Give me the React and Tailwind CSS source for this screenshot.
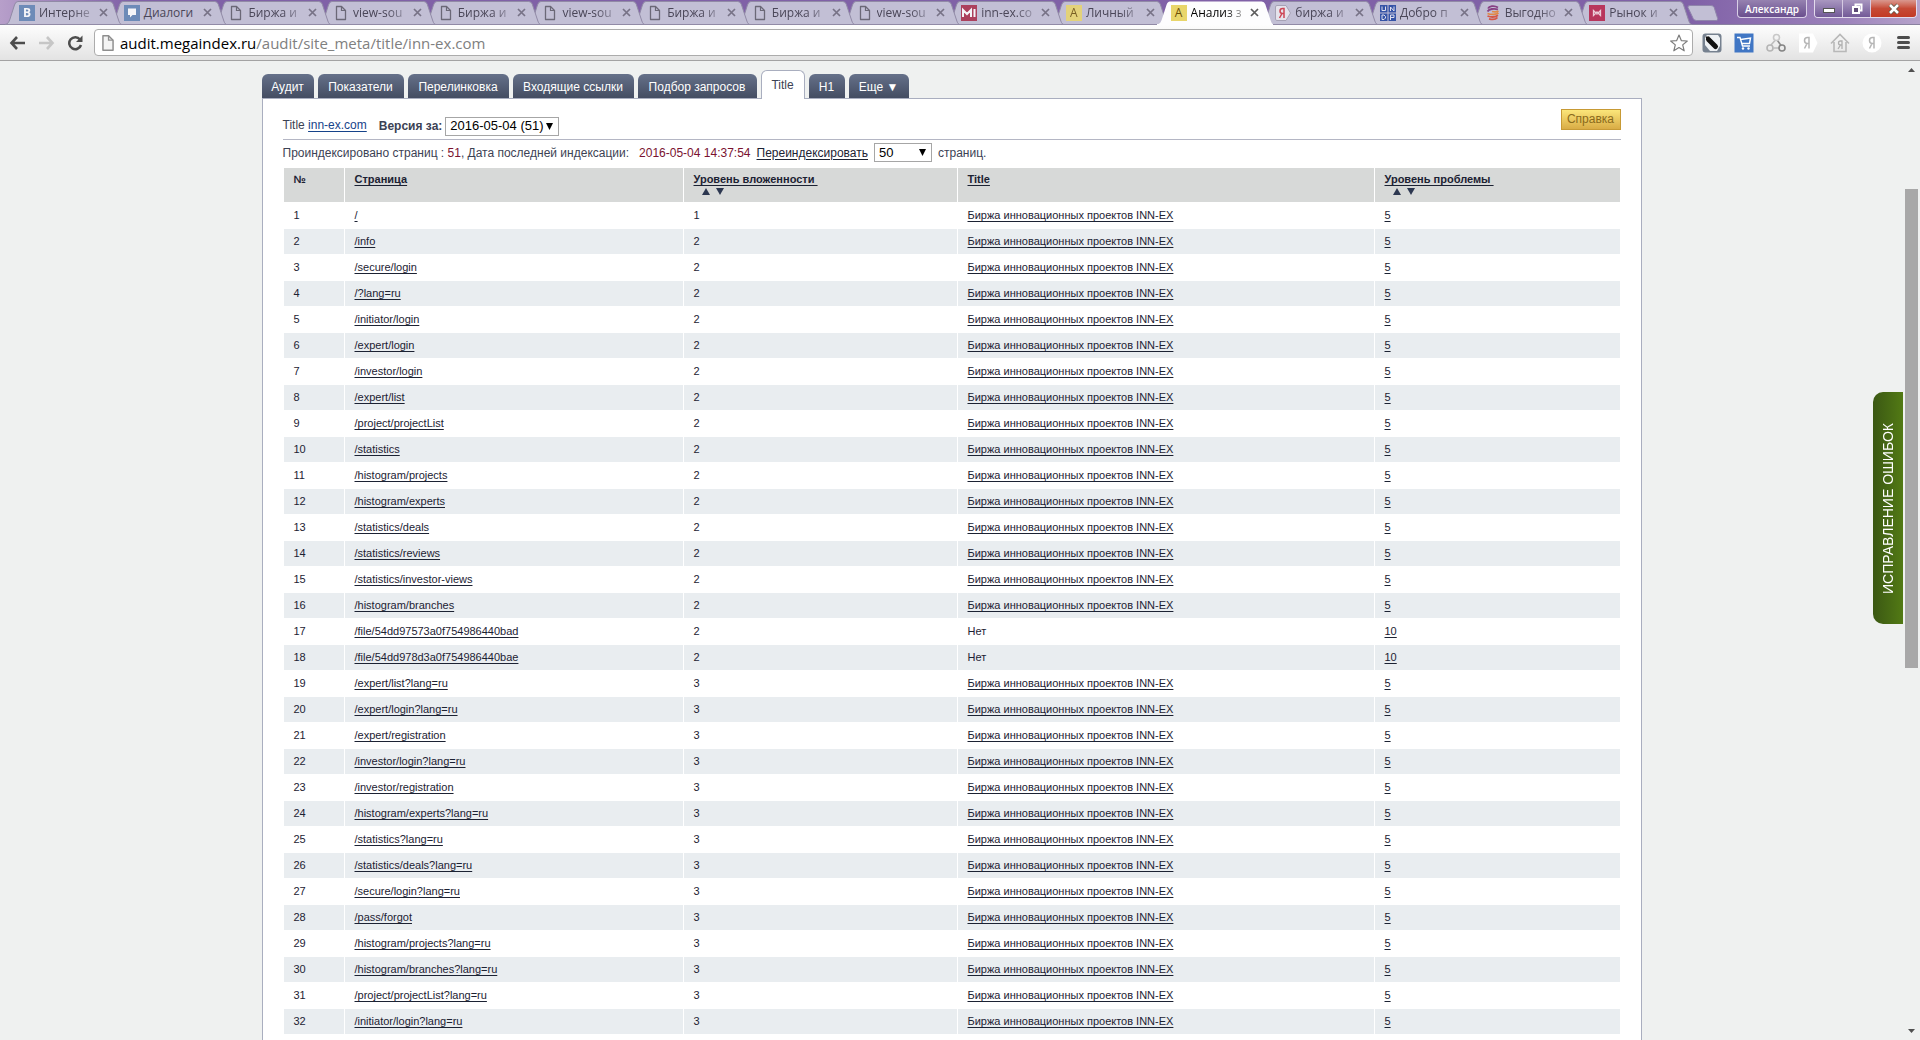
import { useState } from "react";
import clsx from "clsx";

const browserTabs = [
  { icon: "vk", title: "Интерне" },
  { icon: "dialog", title: "Диалоги" },
  { icon: "file", title: "Биржа и" },
  { icon: "file", title: "view-sou" },
  { icon: "file", title: "Биржа и" },
  { icon: "file", title: "view-sou" },
  { icon: "file", title: "Биржа и" },
  { icon: "file", title: "Биржа и" },
  { icon: "file", title: "view-sou" },
  { icon: "mi", title: "inn-ex.co" },
  { icon: "audit", title: "Личный" },
  { icon: "audit", title: "Анализ з", active: true },
  { icon: "yandex", title: "биржа и" },
  { icon: "undp", title: "Добро п" },
  { icon: "globe", title: "Выгодно" },
  { icon: "market", title: "Рынок и" },
];

const siteTabs = [
  { name: "Аудит", width: "w-[52px]" },
  { name: "Показатели", width: "w-[86px]" },
  { name: "Перелинковка", width: "w-[101px]" },
  { name: "Входящие ссылки", width: "w-[121px]" },
  { name: "Подбор запросов", width: "w-[119px]" },
  { name: "Title", width: "w-[44px]" },
  { name: "H1", width: "w-[36px]" },
  { name: "Еще ▼", width: "w-[60px]" },
];

const defaultTitle = "Биржа инновационных проектов INN-EX";

const pages = [
  { path: "/", level: 1 },
  { path: "/info", level: 2 },
  { path: "/secure/login", level: 2 },
  { path: "/?lang=ru", level: 2 },
  { path: "/initiator/login", level: 2 },
  { path: "/expert/login", level: 2 },
  { path: "/investor/login", level: 2 },
  { path: "/expert/list", level: 2 },
  { path: "/project/projectList", level: 2 },
  { path: "/statistics", level: 2 },
  { path: "/histogram/projects", level: 2 },
  { path: "/histogram/experts", level: 2 },
  { path: "/statistics/deals", level: 2 },
  { path: "/statistics/reviews", level: 2 },
  { path: "/statistics/investor-views", level: 2 },
  { path: "/histogram/branches", level: 2 },
  { path: "/file/54dd97573a0f754986440bad", level: 2, missing: true },
  { path: "/file/54dd978d3a0f754986440bae", level: 2, missing: true },
  { path: "/expert/list?lang=ru", level: 3 },
  { path: "/expert/login?lang=ru", level: 3 },
  { path: "/expert/registration", level: 3 },
  { path: "/investor/login?lang=ru", level: 3 },
  { path: "/investor/registration", level: 3 },
  { path: "/histogram/experts?lang=ru", level: 3 },
  { path: "/statistics?lang=ru", level: 3 },
  { path: "/statistics/deals?lang=ru", level: 3 },
  { path: "/secure/login?lang=ru", level: 3 },
  { path: "/pass/forgot", level: 3 },
  { path: "/histogram/projects?lang=ru", level: 3 },
  { path: "/histogram/branches?lang=ru", level: 3 },
  { path: "/project/projectList?lang=ru", level: 3 },
  { path: "/initiator/login?lang=ru", level: 3 },
];

const FileIcon = ({ className, stroke = "#5c5967", fill = "none" }) => (
  <svg viewBox="0 0 16 16" className={className}>
    <path d="M3.5 1.5h5l4 4v9h-9z" fill={fill} stroke={stroke} strokeWidth="1.3" strokeLinejoin="round" />
    <path d="M8.5 1.5v4h4" fill="none" stroke={stroke} strokeWidth="1.2" />
  </svg>
);

const Favicon = ({ type }) => {
  if (type === "file") {
    return <FileIcon className="w-4 h-4 shrink-0" />;
  }
  if (type === "vk") {
    return (
      <span className="w-4 h-4 shrink-0 bg-[#5f83b3] text-white text-xs leading-4 font-bold text-center">
        B
      </span>
    );
  }
  if (type === "mi") {
    return (
      <svg viewBox="0 0 16 16" className="w-4 h-4 shrink-0">
        <rect width="16" height="16" fill="#a92c49" />
        <path d="M2 12V5l4 4 4-4v7M13.5 4v8" fill="none" stroke="#fff" strokeWidth="2" />
      </svg>
    );
  }
  if (type === "audit") {
    return (
      <span className="w-4 h-4 shrink-0 bg-[#e9d66b] text-[#6b4e05] text-xs leading-4 text-center">
        A
      </span>
    );
  }
  if (type === "yandex") {
    return (
      <svg viewBox="0 0 16 16" className="w-4 h-4 shrink-0">
        <path d="M2 .5h9l4.500 7.500-4.500 7.500H2a1.500 1.500 0 0 1-1.500-1.500V2A1.500 1.500 0 0 1 2 .5z" fill="#ece9f0" stroke="#a29db0" />
        <path d="M9 13V3.500H7.500a2.300 2.300 0 0 0 0 5H9M7 8.500L4.500 13" fill="none" stroke="#d0313f" strokeWidth="1.500" />
      </svg>
    );
  }
  if (type === "undp") {
    return (
      <svg viewBox="0 0 16 16" className="w-4 h-4 shrink-0">
        <path d="M0 0h7.500v7.500H0zM8.500 0H16v7.500H8.500zM0 8.500h7.500V16H0zM8.500 8.500H16V16H8.500z" fill="#1d419e" />
        <path d="M2 1.500v4h3.500v-4M10.500 6V2l3.500 4V1.500M2 10h2l1.500 1.500V13L4 14.500H2zM10.500 15v-5H14v2.500h-3.500" fill="none" stroke="#e4e4f2" />
      </svg>
    );
  }
  if (type === "globe") {
    return (
      <svg viewBox="0 0 16 16" className="w-4 h-4 shrink-0" fill="none" strokeWidth="1.800">
        <path d="M13 2.500C9 0 4 1 3 3.500M13 4.500C9 3 4 4 2.500 6.500" stroke="#7d2a76" />
        <path d="M7 6.500c3 .8 5 .5 6.500-.5M2.500 8.500c4 1.500 9 1 11-.5" stroke="#e8802c" />
        <path d="M2.500 11c4 1.500 8 1 10.500-.8M4 13.800c4 1.200 7 .4 8.500-1.300" stroke="#d8452c" />
      </svg>
    );
  }
  if (type === "market") {
    return (
      <svg viewBox="0 0 16 16" className="w-4 h-4 shrink-0">
        <rect width="16" height="16" fill="#b71f48" />
        <path d="M4.500 10.500v-5L8 9l3.500-3.500v5L8 7z" fill="none" stroke="#f3cfd9" strokeWidth="1.300" />
      </svg>
    );
  }
  return (
    <svg viewBox="0 0 16 16" className="w-4 h-4 shrink-0">
      <rect width="16" height="16" fill="#5f83b3" />
      <path d="M4 3.500h8v6.500H8.500L6 12.500V10H4z" fill="#fff" />
    </svg>
  );
};

const BrowserTab = ({ tab, order }) => (
  <div
    className="relative flex-1 min-w-0 h-[25px] flex items-center gap-1 pl-3.5 pr-0.5"
    style={{ zIndex: tab.active ? 40 : order }}
  >
    <svg
      viewBox="0 0 117 25"
      preserveAspectRatio="none"
      className="absolute left-0 top-0 w-[calc(100%+12px)] h-[25px]"
    >
      <path
        d="M0 24.500C3 24 4 22 5 19L9.500 5Q10.500 1.500 13 1.500H105Q107.500 1.500 108.500 4L113.500 19C114.500 22 115 24 117 24.500z"
        fill={tab.active ? "#fdfdfe" : "#c2bfd5"}
        stroke={tab.active ? "none" : "#918aa6"}
      />
      {tab.active && <path d="M0 24h117v1H0z" fill="#fdfdfe" />}
    </svg>
    <span className={clsx("relative flex items-center", !tab.active && "opacity-85")}>
      <Favicon type={tab.icon} />
    </span>
    <span
      className={clsx(
        "relative flex-1 min-w-0 whitespace-nowrap text-xs leading-[18px]",
        tab.title !== "Диалоги" && "[mask-image:linear-gradient(to_right,black_60%,transparent_110%)]",
        tab.active ? "text-black" : "text-[#4a4658]"
      )}
    >
      {tab.title}
    </span>
    <button type="button" aria-label="Закрыть вкладку" className="relative shrink-0 w-[9px] h-4 flex items-center">
      <svg viewBox="0 0 9 9" className="w-[9px] h-[9px]">
        <path d="M1 1l7 7M8 1L1 8" stroke={tab.active ? "#5b5b5b" : "#777286"} strokeWidth="1.700" />
      </svg>
    </button>
  </div>
);

const TabStrip = () => (
  <div className="flex items-start h-[25px] pl-[5px] pr-[3px] border-b border-[#8a82a0] bg-[linear-gradient(to_right,#b79fca_0,#8061a7_130px,#8061a7_88%,#9c82bb_96%,#b6a3cb)]">
    <div className="flex flex-1 min-w-0 isolate">
      {browserTabs.map((tab, i) => (
        <BrowserTab key={i} tab={tab} order={browserTabs.length - i} />
      ))}
    </div>
    <button type="button" aria-label="Новая вкладка" className="ml-[7px] mt-[5px] w-8 h-4">
      <svg viewBox="0 0 32 16" className="w-8 h-4">
        <path d="M3 .5h21q2.500 0 3.200 2l3.500 11q.5 2-1.500 2H9.500q-2.500 0-3.300-2L1 2.500Q.5.500 3 .5z" fill="#c2bfd5" stroke="#8f84ab" />
      </svg>
    </button>
    <button
      type="button"
      className="ml-[18px] w-[70px] h-[18px] rounded-b border border-t-0 border-[#d9cfe6] bg-linear-to-b from-[#9682b0] to-[#6a4f8e] text-[10px] leading-4 font-semibold text-white text-center"
    >
      Александр
    </button>
    <div className="ml-[7px] w-[103px] h-[18px] flex rounded-b border border-t-0 border-[#e3dbed] overflow-hidden">
      <button type="button" aria-label="Свернуть" className="w-7 flex justify-center items-center border-r border-[#d5cae2] bg-linear-to-b from-[#a997c0] to-[#735a97]">
        <svg viewBox="0 0 12 12" className="w-3 h-3">
          <rect x=".5" y="5.500" width="11" height="4" fill="#fff" stroke="#555" />
        </svg>
      </button>
      <button type="button" aria-label="Восстановить" className="w-7 flex justify-center items-center border-r border-[#d5cae2] bg-linear-to-b from-[#a997c0] to-[#735a97]">
        <svg viewBox="0 0 12 12" className="w-3 h-3">
          <path d="M4.500 3V1.500h6v6H9" fill="none" stroke="#fff" strokeWidth="2" />
          <rect x="2" y="4" width="6" height="6" fill="#5d4a75" stroke="#fff" strokeWidth="2" />
        </svg>
      </button>
      <button type="button" aria-label="Закрыть" className="flex-1 flex justify-center items-center bg-linear-to-b from-[#d9988f] via-[#c64a36] to-[#c23a25]">
        <svg viewBox="0 0 12 12" className="w-3 h-3">
          <path d="M2 2l8 8M10 2l-8 8" stroke="#554" strokeWidth="4" />
          <path d="M2 2l8 8M10 2l-8 8" stroke="#fff" strokeWidth="2.600" />
        </svg>
      </button>
    </div>
  </div>
);

const Toolbar = () => (
  <div className="flex items-center h-9 pl-[9px] pr-2.5 border-b border-[#a3a3a3] bg-linear-to-b from-[#fdfdfd] to-[#e3e3e3]">
    <button type="button" aria-label="Назад" className="w-4 h-4">
      <svg viewBox="0 0 16 16" className="w-4 h-4">
        <path d="M8 2L2.500 8 8 14M3 8h13" fill="none" stroke="#4d4d4d" strokeWidth="2.600" />
      </svg>
    </button>
    <button type="button" aria-label="Вперед" className="ml-3.5 w-4 h-4">
      <svg viewBox="0 0 16 16" className="w-4 h-4">
        <path d="M8 2l5.500 6L8 14M13 8H0" fill="none" stroke="#c6c6c6" strokeWidth="2.600" />
      </svg>
    </button>
    <button type="button" aria-label="Обновить" className="ml-3 w-4 h-4">
      <svg viewBox="0 0 16 16" className="w-4 h-4">
        <path d="M13 4.500A6 6 0 1 0 14 10" fill="none" stroke="#4d4d4d" strokeWidth="2.500" />
        <path d="M15.500.5V7H9z" fill="#4d4d4d" />
      </svg>
    </button>
    <div className="ml-[11px] flex-1 min-w-0 h-[27px] flex items-center pl-1 pr-1 bg-white border border-[#acacac] rounded-sm">
      <FileIcon className="w-[18px] h-[18px]" stroke="#8e8e8e" fill="#f4f4f4" />
      <p className="ml-[3px] flex-1 text-[15px] leading-5 text-[#808080]">
        <span className="text-black">audit.megaindex.ru</span>/audit/site_meta/title/inn-ex.com
      </p>
      <button type="button" aria-label="Добавить в закладки" className="w-[18px] h-[18px]">
        <svg viewBox="0 0 18 18" className="w-[18px] h-[18px]">
          <path d="M9 1l2.300 5.600 6 .4-4.600 3.900 1.500 5.900L9 13.600l-5.200 3.200 1.500-5.900L.7 7l6-.4z" fill="#fff" stroke="#7c7c7c" strokeWidth="1.200" strokeLinejoin="round" />
        </svg>
      </button>
    </div>
    <div className="ml-[9px] flex gap-3">
      <svg viewBox="0 0 20 20" className="w-5 h-5">
        <rect x=".5" y=".5" width="19" height="19" rx="3" fill="#76818f" />
        <path d="M5 2h11l2 3v8l-3 5H8l-5-6V4z" fill="#eef1f4" />
        <path d="M6.500 6.500l7 7" stroke="#111" strokeWidth="5" strokeLinecap="round" />
        <path d="M3.500 3.500l4 0-3 3.500z" fill="#111" />
      </svg>
      <svg viewBox="0 0 20 20" className="w-5 h-5">
        <rect x=".5" y=".5" width="19" height="19" fill="#4076c4" />
        <path d="M3 4.500h3l2.500 8.500h7.500M6.500 6.500L16.500 5l-1 5.500H8" fill="none" stroke="#fff" strokeWidth="1.400" />
        <circle cx="9" cy="15.500" r="1.200" fill="#fff" />
        <circle cx="14.500" cy="15.500" r="1.200" fill="#fff" />
      </svg>
      <svg viewBox="0 0 20 20" className="w-5 h-5" fill="none" strokeWidth="1.600">
        <path d="M9 7.500L5 12M7.500 15H13" stroke="#bcbcbc" />
        <path d="M11.500 7.500l3.500 5" stroke="#8c8c8c" />
        <circle cx="10.500" cy="4.500" r="3" stroke="#c8c8c8" />
        <circle cx="4" cy="15" r="3" stroke="#b5b5b5" />
        <circle cx="16" cy="15" r="3" stroke="#858585" />
      </svg>
      <svg viewBox="0 0 20 20" className="w-5 h-5">
        <path d="M1 .5h14L19.500 10 15 19.500H1z" fill="#fff" />
        <path d="M11 15.500v-11H9.500a3 3 0 0 0 0 6H11M9 10.500L6.500 15.500" fill="none" stroke="#b5b5b5" strokeWidth="1.500" />
      </svg>
      <svg viewBox="0 0 20 20" className="w-5 h-5" fill="none">
        <path d="M1 10.500L10 1.500l9 9M4 9v9.500h12V9" stroke="#b8b8b8" strokeWidth="1.600" />
        <path d="M12 16V8h-1.500a2 2 0 0 0 0 4H12M10.500 12L8 16" stroke="#b0b0b0" strokeWidth="1.300" />
      </svg>
      <svg viewBox="0 0 20 20" className="w-5 h-5">
        <circle cx="10" cy="10" r="9.500" fill="#fff" />
        <path d="M12 15.500v-11h-1.500a3 3 0 0 0 0 6H12M10 10.500L7.500 15.500" fill="none" stroke="#b5b5b5" strokeWidth="1.500" />
      </svg>
    </div>
    <button type="button" aria-label="Меню" className="ml-[15px] flex flex-col gap-0.5">
      <span className="w-[13px] h-[3px] rounded-xs bg-[#4d4d4d]" />
      <span className="w-[13px] h-[3px] rounded-xs bg-[#4d4d4d]" />
      <span className="w-[13px] h-[3px] rounded-xs bg-[#4d4d4d]" />
    </button>
  </div>
);

const Select = ({ label, value, onChange, options, className }) => (
  <span className={clsx("relative inline-flex items-center", className)}>
    <select
      aria-label={label}
      value={value}
      onChange={(e) => onChange(e.target.value)}
      className="appearance-none w-full h-[19px] pl-1 bg-white border border-[#a6a6a6] text-[13px] leading-4 text-black"
    >
      {options.map((option) => (
        <option key={option}>{option}</option>
      ))}
    </select>
    <svg viewBox="0 0 7 7" className="absolute right-1.5 w-[7px] h-[7px] pointer-events-none">
      <path d="M0 0h7L3.500 7z" fill="#000" />
    </svg>
  </span>
);

const SortArrows = () => (
  <span className="flex gap-1.5 pl-2 pt-0.5">
    <button type="button" aria-label="По возрастанию" className="w-2 h-[7px]">
      <svg viewBox="0 0 8 7" className="w-2 h-[7px]">
        <path d="M4 0l4 7H0z" fill="#2c3750" />
      </svg>
    </button>
    <button type="button" aria-label="По убыванию" className="w-2 h-[7px]">
      <svg viewBox="0 0 8 7" className="w-2 h-[7px]">
        <path d="M0 0h8L4 7z" fill="#2c3750" />
      </svg>
    </button>
  </span>
);

const HeadLink = ({ children }) => (
  <a href="#" className="underline underline-offset-2 whitespace-pre">
    {children}
  </a>
);

const PagesTable = () => (
  <table className="w-full table-fixed border-separate border-spacing-px text-[11px] leading-[13px] text-[#1c2233]">
    <colgroup>
      <col className="w-[60px]" />
      <col className="w-[338px]" />
      <col className="w-[273px]" />
      <col className="w-[416px]" />
      <col />
    </colgroup>
    <thead>
      <tr className="h-[34px] text-left align-top bg-[#d7d9d8]">
        <th className="px-2.5 pt-[5px]">№</th>
        <th className="px-2.5 pt-[5px]">
          <HeadLink>Страница</HeadLink>
        </th>
        <th className="px-2.5 pt-[5px]">
          <HeadLink>{"Уровень вложенности "}</HeadLink>
          <SortArrows />
        </th>
        <th className="px-2.5 pt-[5px]">
          <HeadLink>Title</HeadLink>
        </th>
        <th className="px-2.5 pt-[5px]">
          <HeadLink>{"Уровень проблемы "}</HeadLink>
          <SortArrows />
        </th>
      </tr>
    </thead>
    <tbody>
      {pages.map((page, i) => (
        <tr key={page.path} className="h-[25px] even:bg-[#e9edf0]">
          <td className="px-2.5">{i + 1}</td>
          <td className="px-2.5">
            <a href="#" className="underline underline-offset-2">
              {page.path}
            </a>
          </td>
          <td className="px-2.5">{page.level}</td>
          <td className="px-2.5">
            {page.missing ? (
              "Нет"
            ) : (
              <a href="#" className="underline underline-offset-2">
                {defaultTitle}
              </a>
            )}
          </td>
          <td className="px-2.5">
            <a href="#" className="underline underline-offset-2">
              {page.missing ? 10 : 5}
            </a>
          </td>
        </tr>
      ))}
    </tbody>
  </table>
);

const App = () => {
  const [activeTab, setActiveTab] = useState("Title");
  const [version, setVersion] = useState("2016-05-04 (51)");
  const [limit, setLimit] = useState("50");

  return (
    <div className="h-screen flex flex-col overflow-hidden bg-[#eff1f0]">
      <header className="font-['Open_Sans',sans-serif]">
        <TabStrip />
        <Toolbar />
      </header>

      <div className="flex-1 min-h-0 flex font-['Liberation_Sans',Arial,sans-serif] text-xs text-[#3c4254]">
        <main className="relative flex-1 min-w-0 overflow-hidden">
          <div className="w-full max-w-[1380px] mx-auto pt-[9px]">
            <nav className="relative z-10 flex items-end gap-1 h-7">
              {siteTabs.map(({ name, width }) => (
                <button
                  key={name}
                  type="button"
                  onClick={() => setActiveTab(name)}
                  className={clsx(
                    "shrink-0 rounded-t-md whitespace-nowrap text-xs text-center",
                    width,
                    name === activeTab
                      ? "h-[29px] -mb-px border border-b-0 border-[#a9aebf] bg-white text-[#3c4254]"
                      : "h-6 pt-0.5 bg-linear-to-b from-[#66718a] to-[#444d62] text-white"
                  )}
                >
                  {name}
                </button>
              ))}
            </nav>

            <section className="px-5 pb-5 min-h-screen bg-white border border-[#a9aebf]">
              <div className="h-[41px] flex items-center justify-between border-b border-[#b4b6c4]">
                <div className="flex items-center pt-3.5">
                  <h1 className="pb-0.5">
                    Title{" "}
                    <a href="#" className="text-[#16438a] underline underline-offset-2">
                      inn-ex.com
                    </a>
                  </h1>
                  <span className="ml-3 font-bold">Версия за:</span>
                  <Select
                    label="Версия за"
                    value={version}
                    onChange={setVersion}
                    options={["2016-05-04 (51)"]}
                    className="ml-[3px] w-[114px]"
                  />
                </div>
                <button
                  type="button"
                  className="w-[60px] h-[21px] border border-[#c79a35] bg-linear-to-b from-[#fbe67a] to-[#d9ac45] text-xs leading-4 text-[#8a6a1c]"
                >
                  Справка
                </button>
              </div>

              <div className="h-[25px] mb-0.5 flex items-center">
                <p>
                  Проиндексировано страниц : <span className="text-[#7a1230]">51</span>, Дата последней
                  индексации:
                </p>
                <span className="ml-2.5 text-[#7a1230]">2016-05-04 14:37:54</span>
                <a href="#" className="ml-1.5 text-[#1c2233] underline underline-offset-2">
                  Переиндексировать
                </a>
                <Select
                  label="Количество страниц"
                  value={limit}
                  onChange={setLimit}
                  options={["50", "100", "500"]}
                  className="mx-1.5 w-[58px]"
                />
                <span>страниц.</span>
              </div>

              <PagesTable />
            </section>
          </div>

          <button
            type="button"
            className="absolute right-0 top-[331px] w-[30px] h-[232px] flex items-center justify-center rounded-l-[10px] bg-linear-to-r from-[#3b5813] to-[#527a14] text-white text-sm"
          >
            <span className="[writing-mode:vertical-rl] rotate-180 whitespace-nowrap">ИСПРАВЛЕНИЕ ОШИБОК</span>
          </button>
        </main>

        <div aria-hidden="true" className="w-[17px] flex flex-col items-center justify-between py-[7px]">
          <svg viewBox="0 0 7 4" className="w-[7px] h-1">
            <path d="M3.500 0L7 4H0z" fill="#505050" />
          </svg>
          <div className="flex-1 w-full flex flex-col px-0.5">
            <div className="grow-[117]" />
            <div className="grow-[479] bg-[#a8a8a8]" />
            <div className="grow-[361]" />
          </div>
          <svg viewBox="0 0 7 4" className="w-[7px] h-1">
            <path d="M0 0h7L3.500 4z" fill="#505050" />
          </svg>
        </div>
      </div>
    </div>
  );
};

export default App;
